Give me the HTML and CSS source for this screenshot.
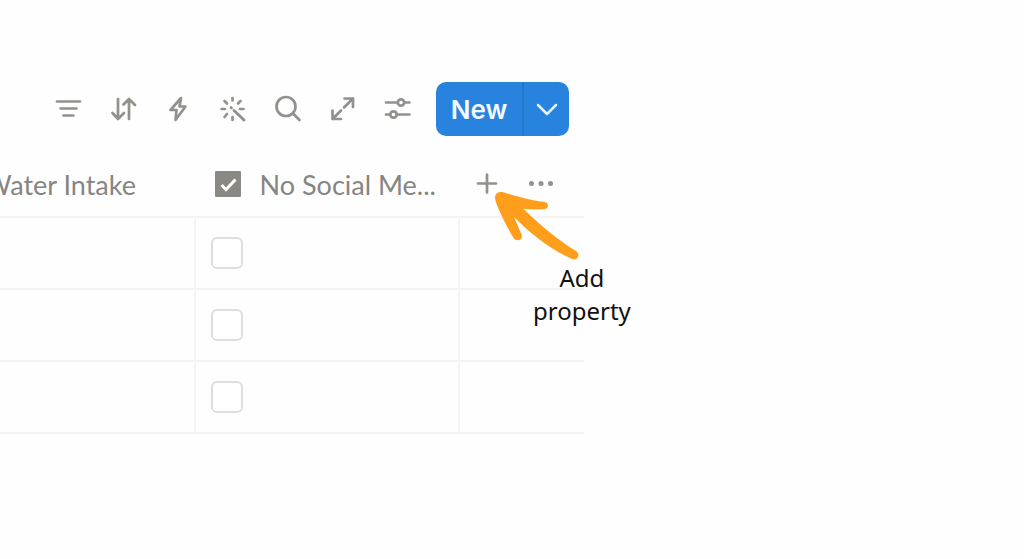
FILE: index.html
```html
<!DOCTYPE html>
<html lang="en">
<head>
    <meta charset="UTF-8">
    <meta name="viewport" content="width=device-width, initial-scale=1.0">
    <title>Habit Tracker</title>
    <link rel="stylesheet" href="styles.css">
</head>
<body>
    <main class="database">
        <div class="toolbar">
            <div class="tools">
                <button class="tool" aria-label="Filter">
                    <svg viewBox="0 0 28 28"><path d="M3 6.500h23M6.500 13.500h16M9.500 20.500h10"/></svg>
                </button>
                <button class="tool" aria-label="Sort">
                    <svg viewBox="0 0 28 28"><path d="M9 4v20M3.500 18l5.500 6 6-6M20 24V4M14.500 9.500L20 4l6 6"/></svg>
                </button>
                <button class="tool" aria-label="Automations">
                    <svg viewBox="0 0 28 28"><path d="M17 3L6.500 15h6L11.500 25 21.500 11.500h-6z"/></svg>
                </button>
                <button class="tool" aria-label="Autofill">
                    <svg viewBox="0 0 28 28"><path d="M13.500 3v2.500M13.500 22v3M2.500 14h3.500M21 14h3.500M5.500 6l2.500 2.500M21.500 6l-2.500 2.500M5.500 22l2.500-3M12 12.500l.5.5"/><path d="M15 15.500l10 9.500" stroke-width="3"/></svg>
                </button>
                <button class="tool" aria-label="Search">
                    <svg viewBox="0 0 28 28"><circle cx="12" cy="11.500" r="9.500"/><path d="M19 18.500l6.500 6.500"/></svg>
                </button>
                <button class="tool" aria-label="Expand">
                    <svg viewBox="0 0 28 28"><path d="M15.500 3.500h8.500v8.500M24 3.500l-9 9M12 24H3.500v-8.500M3.500 24l8.500-8.500"/></svg>
                </button>
                <button class="tool" aria-label="Settings">
                    <svg viewBox="0 0 28 28"><path d="M2 7.500h11.500M20.500 7.500h5M2 19.500h4M13 19.500h12.500"/><circle cx="17" cy="7.500" r="3.200"/><circle cx="9.500" cy="19.500" r="3.200"/></svg>
                </button>
            </div>
            <div class="new-group">
                <button class="new-button">New</button>
                <button class="new-menu" aria-label="Templates">
                    <svg viewBox="0 0 24 24"><path d="M3 8l9 9 9-9"/></svg>
                </button>
            </div>
        </div>

        <div class="scroller">
            <table class="grid">
                <thead>
                    <tr>
                        <th><div class="property">Water Intake</div></th>
                        <th>
                            <div class="property">
                                <svg class="property-icon" viewBox="0 0 26 26"><rect width="26" height="26" rx="1"/><path d="M6.500 14l4.500 4.500L20.500 8.500"/></svg>
                                No Social Me...
                            </div>
                        </th>
                        <th class="last">
                            <div class="actions">
                                <button class="tool" aria-label="Add property">
                                    <svg viewBox="0 0 28 28"><path d="M14 4.500v18M5 13.500h18"/></svg>
                                </button>
                                <button class="tool" aria-label="More">
                                    <svg viewBox="0 0 28 28"><g class="dots"><circle cx="4.500" cy="13.500" r="2.500"/><circle cx="14" cy="13.500" r="2.500"/><circle cx="23.500" cy="13.500" r="2.500"/></g></svg>
                                </button>
                            </div>
                        </th>
                    </tr>
                </thead>
                <tbody>
                    <tr>
                        <td></td>
                        <td><input type="checkbox" class="check" aria-label="No Social Media, row 1"></td>
                        <td class="last"></td>
                    </tr>
                    <tr>
                        <td></td>
                        <td><input type="checkbox" class="check" aria-label="No Social Media, row 2"></td>
                        <td class="last"></td>
                    </tr>
                    <tr>
                        <td></td>
                        <td><input type="checkbox" class="check" aria-label="No Social Media, row 3"></td>
                        <td class="last"></td>
                    </tr>
                </tbody>
            </table>
        </div>

        <!-- Note that points at the plus button -->
        <div class="callout">
            <svg class="arrow" viewBox="0 0 270 210"><path d="M7 30C3 15 12 4 28 6C60 15 110 31 153 35C169 37 169 56 152 58C130 59 108 58 91 56C140 104 195 149 249 183C264 194 254 213 237 207C174 179 112 131 63 81L86 134C91 150 71 157 62 144C46 118 16 62 7 30Z"/></svg>
            <p class="callout-text">Add<br>property</p>
        </div>
    </main>
</body>
</html>
```

FILE: styles.css
```css
body {
    margin: 0;
    background-color: #fefefe;
    font-family: Lato, "Liberation Sans", sans-serif;
}
button {
    margin: 0;
    padding: 0;
    border: 0;
    background: none;
    font: inherit;
    cursor: pointer;
}
.database {
    position: relative;
    padding-top: 82px;
}
.toolbar {
    display: flex;
    align-items: center;
    gap: 24px;
    padding-left: 54px;
}
.tools {
    display: flex;
    gap: 27px;
}
.tool {
    display: flex;
    width: 28px;
    height: 28px;
}
.tool svg {
    width: 28px;
    height: 28px;
    fill: none;
    stroke: #91918e;
    stroke-width: 2.7;
    stroke-linecap: round;
    stroke-linejoin: round;
}
.tool .dots {
    fill: #91918e;
    stroke: none;
}
.new-group {
    display: flex;
    height: 54px;
    border-radius: 10px;
    background-color: #2783de;
    overflow: hidden;
}
.new-button {
    width: 86px;
    color: #f5faff;
    font-family: Inter, "Liberation Sans", sans-serif;
    font-size: 26px;
    font-weight: 600;
}
.new-menu {
    display: flex;
    align-items: center;
    justify-content: center;
    width: 47px;
    border-left: 2px solid #2377ca;
    box-sizing: border-box;
}
.new-menu svg {
    width: 24px;
    height: 24px;
    fill: none;
    stroke: #e4f1ff;
    stroke-width: 2.5;
    stroke-linecap: round;
    stroke-linejoin: round;
}
.scroller {
    margin-top: 16px;
    overflow: hidden;
}
/* scrolled sideways, so the first column is cut off */
.grid {
    width: 652px;
    margin-left: -68px;
    border-spacing: 0;
    table-layout: fixed;
}
.grid th,
.grid td {
    box-sizing: border-box;
    padding: 0;
    border-bottom: 2px solid #f3f3f2;
    text-align: left;
}
.grid th {
    width: 264px;
    height: 66px;
}
.grid td {
    height: 72px;
    padding-left: 15px;
    border-right: 2px solid #f5f5f4;
}
.grid th.last {
    width: 124px;
}
.grid td.last {
    border-right: 0;
}
.property {
    display: flex;
    align-items: center;
    justify-content: flex-end;
    gap: 19px;
    padding-right: 24px;
    color: #868582;
    font-size: 27px;
    font-weight: 400;
    white-space: nowrap;
}
.grid th:first-child .property {
    padding-right: 60px;
}
.property-icon {
    width: 26px;
    height: 26px;
    fill: #8a8984;
}
.property-icon path {
    fill: none;
    stroke: #ffffff;
    stroke-width: 3;
}
.actions {
    display: flex;
    gap: 26px;
    padding-left: 13px;
}
.check {
    display: block;
    width: 32px;
    height: 32px;
    margin: 0;
    border: 2px solid #dededd;
    border-radius: 6px;
    background-color: #ffffff;
    box-sizing: border-box;
    appearance: none;
}
.callout {
    position: absolute;
    top: 190px;
    left: 493px;
}
.arrow {
    display: block;
    width: 90px;
    height: 70px;
    fill: #ff9e1b;
}
.callout-text {
    margin: 1px 0 0 40px;
    color: #111111;
    font-family: "Noto Sans", sans-serif;
    font-size: 24px;
    line-height: 33px;
    text-align: center;
}
```
